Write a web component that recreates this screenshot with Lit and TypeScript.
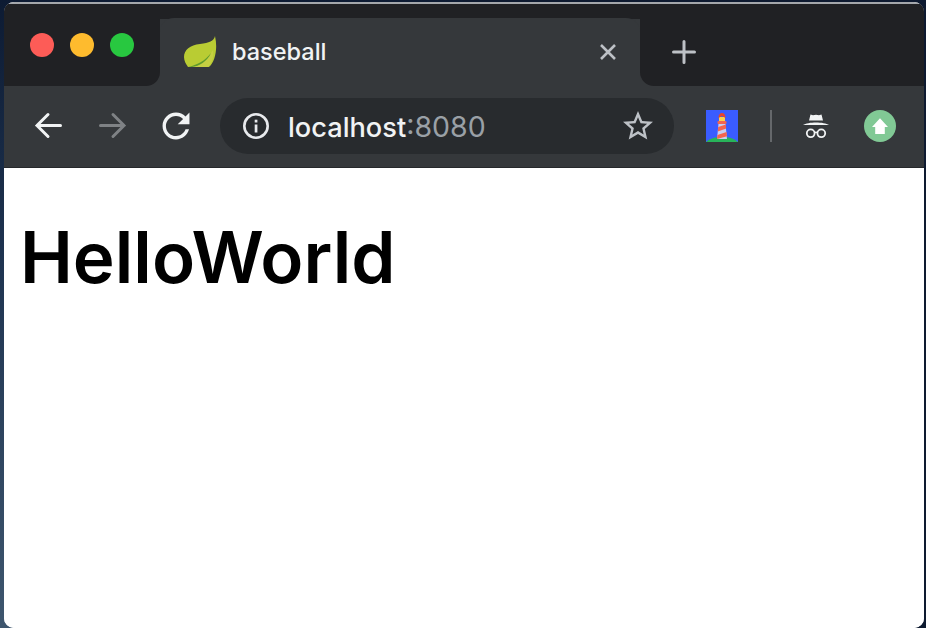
import { LitElement, html, css } from "lit";
import { customElement } from "lit/decorators.js";

@customElement("app-root")
export class AppRoot extends LitElement {
  static styles = css`
    :host {
      display: block;
      width: 926px;
      height: 628px;
      box-sizing: border-box;
      padding: 2px 2px 0 4px;
      overflow: hidden;
      font-family: Inter, "Liberation Sans", sans-serif;
      background:
        linear-gradient(to right, transparent 50%, #0e1a30 50%),
        linear-gradient(to bottom, #0d1b33 0%, #1e3350 40%, #3e566e 100%);
    }
    .window {
      height: 100%;
      display: flex;
      flex-direction: column;
      border-radius: 10px;
      overflow: hidden;
      background: #fff;
    }
    .edge { height: 1.5px; background: #a4a7ab; flex: none; }
    .tabstrip {
      flex: none;
      height: 82.5px;
      display: flex;
      background: linear-gradient(#202124 14.5px, #35383b 14.5px);
    }
    .lights {
      flex: none;
      width: 156px;
      box-sizing: border-box;
      background: #202124;
      border-bottom-right-radius: 14px;
      padding: 29.5px 0 0 26px;
      display: flex;
      gap: 16px;
      align-items: flex-start;
    }
    .light { width: 24px; height: 24px; border-radius: 50%; }
    .red { background: #fd5c57; }
    .yellow { background: #febb2e; }
    .green { background: #28c840; }
    .tab {
      flex: none;
      width: 480px;
      margin-top: 14.5px;
      box-sizing: border-box;
      padding: 0 24px 0 23px;
      background: #35383b;
      border-radius: 14px 14px 0 0;
      display: flex;
      align-items: center;
    }
    .favicon { filter: blur(0.5px); }
    .tab-title {
      flex: 1;
      margin-left: 15px;
      margin-top: -1px;
      font-size: 23.5px;
      font-weight: 500;
      color: #f1f3f4;
    }
    .rest {
      flex: 1;
      background: #202124;
      border-bottom-left-radius: 14px;
      padding: 36.5px 0 0 32px;
    }
    .toolbar {
      flex: none;
      height: 82px;
      background: #35383b;
      border-bottom: 1px solid #26282b;
      box-sizing: border-box;
      display: flex;
      align-items: center;
      padding: 0 0 1px 28px;
    }
    svg { display: block; flex: none; }
    .nav { display: flex; gap: 32px; }
    .omnibox {
      flex: none;
      width: 454px;
      height: 56px;
      margin: 0 32px 0 28px;
      box-sizing: border-box;
      border-radius: 28px;
      background: #282b2e;
      display: flex;
      align-items: center;
      padding: 0 18px 0 22px;
    }
    .url {
      flex: 1;
      margin-left: 18px;
      font-size: 27.2px;
      font-weight: 500;
      color: #f1f3f4;
      white-space: nowrap;
    }
    .port { color: #9aa0a6; font-weight: 400; font-size: 28.5px; }
    .sep { width: 2px; height: 32px; background: #65686b; margin: 0 28px 0 32px; flex: none; }
    .update { margin-left: 32px; }
    .page { flex: 1; background: #fff; }
    h1 {
      margin: 0;
      padding: 45px 0 0 16px;
      font-size: 70.9px;
      line-height: 88px;
      font-weight: 600;
      color: #000;
    }
  `;

  render() {
    return html`
      <div class="window">
        <div class="edge"></div>
        <div class="tabstrip">
          <div class="lights">
            <span class="light red"></span>
            <span class="light yellow"></span>
            <span class="light green"></span>
          </div>
          <div class="tab">
            <svg class="favicon" width="34" height="34" viewBox="0 0 34 34">
              <path d="M32 1C31 6 26 8 17 9C7 10 1 15 1 22C1 26 3 29 5 32L26 32C32 27 35 14 32 1Z" fill="#b9cc33" />
              <path d="M5 32C14 30 24 26 30 15C31 22 29 28 25 32Z" fill="#c5cf42" />
              <path d="M5 32C14 30 22 26 28 18C24 27 16 31 9 32Z" fill="#5f9b2c" />
            </svg>
            <span class="tab-title">baseball</span>
            <svg width="16" height="16" viewBox="0 0 16 16">
              <path d="M1 1L15 15M15 1L1 15" stroke="#bdc1c6" stroke-width="2.6" fill="none" />
            </svg>
          </div>
          <div class="rest">
            <svg width="24" height="24" viewBox="0 0 24 24">
              <path d="M12 1.5V22.5M1.5 12H22.5" stroke="#bdc1c6" stroke-width="3" stroke-linecap="round" fill="none" />
            </svg>
          </div>
        </div>
        <div class="toolbar">
          <div class="nav">
            <svg width="32" height="32" viewBox="0 0 32 32">
              <path d="M28.5 15.5H5M16 4.5L5 15.5L16 26.5" stroke="#f1f3f4" stroke-width="3" fill="none" stroke-linecap="round" />
            </svg>
            <svg width="32" height="32" viewBox="0 0 32 32">
              <path d="M4.5 15.5H28M17 4.5L28 15.5L17 26.5" stroke="#7f8285" stroke-width="3" fill="none" stroke-linecap="round" />
            </svg>
            <svg width="32" height="32" viewBox="2.5 2.5 19 19">
              <path fill="#f1f3f4" d="M17.65 6.35C16.2 4.9 14.21 4 12 4c-4.42 0-7.99 3.58-7.99 8s3.57 8 7.99 8c3.73 0 6.84-2.55 7.73-6h-2.08c-.82 2.33-3.04 4-5.65 4-3.31 0-6-2.69-6-6s2.69-6 6-6c1.66 0 3.14.69 4.22 1.78L13 11h7V4l-2.35 2.35z" />
            </svg>
          </div>
          <div class="omnibox">
            <svg width="28" height="28" viewBox="0 0 28 28">
              <circle cx="14" cy="14" r="11.7" stroke="#e8eaed" stroke-width="2.6" fill="none" />
              <rect x="12.7" y="12.5" width="2.7" height="8" fill="#e8eaed" />
              <rect x="12.7" y="7.7" width="2.7" height="2.8" fill="#e8eaed" />
            </svg>
            <span class="url">localhost<span class="port">:8080</span></span>
            <svg width="36" height="36" viewBox="0 0 24 24">
              <path fill="#bdc1c6" d="M22 9.24l-7.19-.62L12 2 9.19 8.63 2 9.24l5.46 4.73L5.82 21 12 17.27 18.18 21l-1.63-7.03L22 9.24zM12 15.4l-3.76 2.27 1-4.28-3.32-2.88 4.38-.38L12 6.1l1.71 4.04 4.38.38-3.32 2.88 1 4.28L12 15.4z" />
            </svg>
          </div>
          <svg width="32" height="32" viewBox="0 0 32 32">
            <rect width="32" height="32" fill="#3a5cff" />
            <path d="M0 32C4 28 10 27 16 27C22 27 28 28 32 32Z" fill="#28b45a" />
            <path d="M12.5 14H19.5L21 29H11Z" fill="#c9cff0" />
            <path d="M12.2 17L19.8 14.5L20.2 18.5L11.8 21.5ZM11.4 25L20.6 22L21 26.2L11 29Z" fill="#f4654e" />
            <rect x="13" y="7" width="6" height="5" fill="#fbd24e" />
            <path d="M12.5 8C12.5 4.5 14 3 16 3C18 3 19.5 4.5 19.5 8L16 6Z" fill="#e8452c" />
            <rect x="11.5" y="11" width="9" height="3" rx="1" fill="#f4654e" />
          </svg>
          <div class="sep"></div>
          <svg width="32" height="32" viewBox="0 0 32 32">
            <path d="M10.5 4.5L13 5.2L16 4.7L19 5.2L21.5 4.5L23 10.5H9Z" fill="#f1f3f4" />
            <path d="M3 15C8 11.5 24 11.5 29 15Z" fill="#f1f3f4" />
            <circle cx="10.7" cy="23.3" r="3.9" fill="none" stroke="#f1f3f4" stroke-width="1.8" />
            <circle cx="21.3" cy="23.3" r="3.9" fill="none" stroke="#f1f3f4" stroke-width="1.8" />
            <path d="M14.5 22.6Q16 21.8 17.5 22.6" fill="none" stroke="#f1f3f4" stroke-width="1.6" />
          </svg>
          <svg class="update" width="32" height="32" viewBox="0 0 32 32">
            <circle cx="16" cy="16" r="16" fill="#81c995" />
            <path d="M16 8.3L24 17H20.8V24H11.2V17H8Z" fill="#fff" />
          </svg>
        </div>
        <div class="page"><h1>HelloWorld</h1></div>
      </div>
    `;
  }
}
